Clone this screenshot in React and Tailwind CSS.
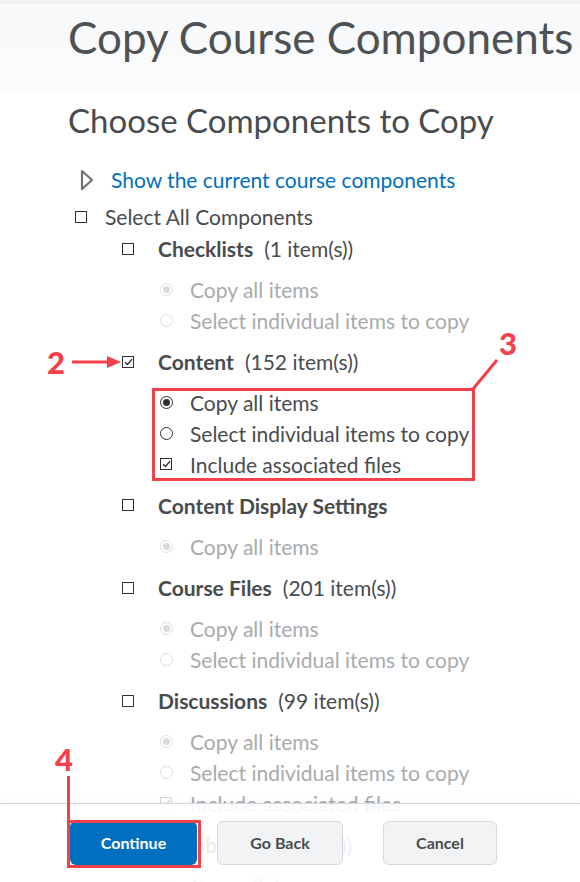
const COMPONENTS = [
  { name: 'Checklists', count: '(1 item(s))', checked: false, options: ['all', 'individual'] },
  { name: 'Content', count: '(152 item(s))', checked: true, options: ['all', 'individual', 'files'] },
  { name: 'Content Display Settings', count: '', checked: false, options: ['all'] },
  { name: 'Course Files', count: '(201 item(s))', checked: false, options: ['all', 'individual'] },
  { name: 'Discussions', count: '(99 item(s))', checked: false, options: ['all', 'individual', 'files'] },
  { name: 'Dropbox', count: '(12 item(s))', checked: false, options: ['all', 'individual'] },
];

const LABELS = {
  all: 'Copy all items',
  individual: 'Select individual items to copy',
  files: 'Include associated files',
};

function Checkbox({ checked, disabled }) {
  return (
    <span
      className={`w-[12px] h-[12px] border-[1.5px] flex items-center justify-center shrink-0 ${
        disabled ? 'border-[#d4d6d8]' : 'border-[#2f3133]'
      }`}
    >
      {checked && (
        <svg width="9" height="8" viewBox="0 0 9 8">
          <path
            d="M1 4.2 L3.4 6.5 L8 1.2"
            fill="none"
            stroke={disabled ? '#d4d6d8' : '#2f3133'}
            strokeWidth="1.3"
          />
        </svg>
      )}
    </span>
  );
}

function Radio({ selected, disabled }) {
  return (
    <span
      className={`w-[13px] h-[13px] rounded-full border flex items-center justify-center shrink-0 ${
        disabled ? 'border-[#dcdee0]' : 'border-[#2f3133]'
      }`}
    >
      {selected && (
        <span className={`w-[7px] h-[7px] rounded-full ${disabled ? 'bg-[#d8dadc]' : 'bg-[#2f3133]'}`} />
      )}
    </span>
  );
}

function OptionRow({ kind, active }) {
  const disabled = !active;
  return (
    <div className="h-[30.75px] flex items-center pl-[160px]">
      <div className="w-[30px] flex">
        {kind === 'files' ? (
          <Checkbox checked disabled={disabled} />
        ) : (
          <Radio selected={kind === 'all'} disabled={disabled} />
        )}
      </div>
      <span className={`text-[21px] whitespace-nowrap ${disabled ? 'text-[#a8abad]' : 'text-[#494c4e]'}`}>
        {LABELS[kind]}
      </span>
    </div>
  );
}

function ComponentGroup({ item }) {
  return (
    <div className="mt-[10px]">
      <div className="h-[31px] flex items-center pl-[122px]">
        <div className="w-[36px] flex">
          <Checkbox checked={item.checked} />
        </div>
        <span className="text-[21px] font-bold text-[#494c4e] whitespace-nowrap">{item.name}</span>
        {item.count && <span className="text-[21px] text-[#494c4e] ml-[11px] whitespace-nowrap">{item.count}</span>}
      </div>
      <div className="mt-[10.5px]">
        {item.options.map((k) => (
          <OptionRow key={k} kind={k} active={item.checked} />
        ))}
      </div>
    </div>
  );
}

function Annotations() {
  return (
    <svg className="absolute left-0 top-0 pointer-events-none" width="580" height="882" viewBox="0 0 580 882">
      {/* 2 + arrow */}
      <text x="47" y="374" fill="#f4404a" fontSize="31" fontWeight="900" fontFamily="Lato, 'Liberation Sans', sans-serif">2</text>
      <line x1="72" y1="362" x2="110" y2="362" stroke="#f4404a" strokeWidth="3" />
      <path d="M107 356 L121 362 L107 368 Z" fill="#f4404a" />
      {/* 3 + box */}
      <text x="499" y="355" fill="#f4404a" fontSize="31" fontWeight="900" fontFamily="Lato, 'Liberation Sans', sans-serif">3</text>
      <rect x="153.5" y="389.5" width="320" height="90" fill="none" stroke="#f4404a" strokeWidth="3" />
      <line x1="497" y1="360" x2="473" y2="389" stroke="#f4404a" strokeWidth="3" />
      {/* 4 + box */}
      <text x="55" y="771" fill="#f4404a" fontSize="31" fontWeight="900" fontFamily="Lato, 'Liberation Sans', sans-serif">4</text>
      <line x1="68.5" y1="776" x2="68.5" y2="822" stroke="#f4404a" strokeWidth="3" />
      <rect x="68.5" y="821.5" width="131" height="45" fill="none" stroke="#f4404a" strokeWidth="3" />
    </svg>
  );
}

export default function App() {
  return (
    <div className="relative w-[580px] h-[882px] bg-white overflow-hidden font-['Lato','Liberation_Sans',sans-serif]">
      {/* Header band */}
      <div className="h-[4px] bg-[#f1f3f5]" />
      <div className="h-[86px] bg-gradient-to-b from-[#f9fafb] via-[#f9fafb] to-[#fcfcfd] pl-[68px] pt-[6px]">
        <h1 className="text-[44px] leading-[54px] text-[#4f5255] whitespace-nowrap">Copy Course Components</h1>
      </div>

      <div className="pb-[40px]">
        <h2 className="pl-[68px] mt-[8px] text-[33px] leading-[44px] text-[#494c4e] whitespace-nowrap">Choose Components to Copy</h2>

        <div className="mt-[23px] h-[30px] flex items-center pl-[80px]">
          <svg width="14" height="22" viewBox="0 0 14 22" className="shrink-0">
            <path d="M2 2 L12 11 L2 20 Z" fill="none" stroke="#6e7376" strokeWidth="2.2" strokeLinejoin="round" />
          </svg>
          <span className="ml-[17px] text-[21px] text-[#006fbf] whitespace-nowrap">Show the current course components</span>
        </div>

        <div className="mt-[7px] h-[30px] flex items-center pl-[75px]">
          <div className="w-[30px] flex">
            <Checkbox checked={false} />
          </div>
          <span className="text-[21px] text-[#494c4e] whitespace-nowrap">Select All Components</span>
        </div>

        <div className="-mt-[9px]">
          {COMPONENTS.map((c) => (
            <ComponentGroup key={c.name} item={c} />
          ))}
        </div>
      </div>

      {/* Sticky footer */}
      <div className="absolute left-0 bottom-0 w-[580px] h-[79px] bg-white/90 border-t border-[#d3d9e3] shadow-[0_-2px_4px_rgba(0,0,0,0.04)] flex items-center pl-[70px] gap-[20px]">
        <button className="w-[127px] h-[44px] bg-[#006fbf] text-white text-[16px] font-bold rounded-[6px]">
          Continue
        </button>
        <button className="w-[126px] h-[44px] bg-[#f1f3f5] border border-[#d3d9e3] text-[#494c4e] text-[16px] font-bold rounded-[6px]">
          Go Back
        </button>
        <button className="ml-[20px] w-[114px] h-[44px] bg-[#f1f3f5] border border-[#d3d9e3] text-[#494c4e] text-[16px] font-bold rounded-[6px]">
          Cancel
        </button>
      </div>

      <Annotations />
    </div>
  );
}
